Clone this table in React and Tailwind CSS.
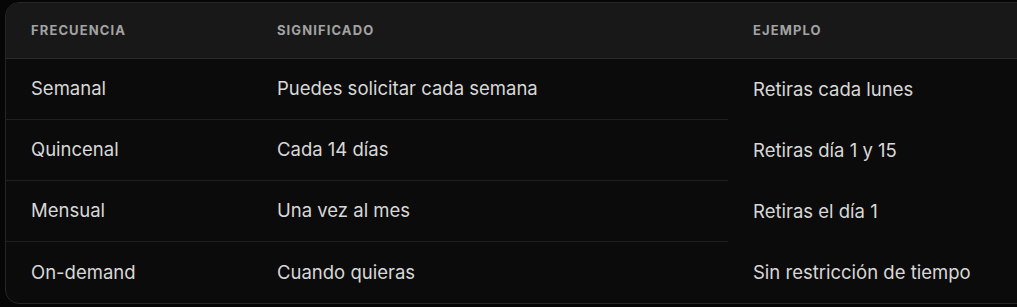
import React from 'react';

const rows = [
  ['Semanal', 'Puedes solicitar cada semana', 'Retiras cada lunes'],
  ['Quincenal', 'Cada 14 días', 'Retiras día 1 y 15'],
  ['Mensual', 'Una vez al mes', 'Retiras el día 1'],
  ['On-demand', 'Cuando quieras', 'Sin restricción de tiempo'],
];

function App() {
  return (
    <div className="w-screen h-[307px] overflow-hidden bg-[#060606] pl-[5px] pt-[2px]" style={{ fontFamily: 'Inter, "Noto Sans", sans-serif' }}>
      <div className="w-[1060px] rounded-[14px] border border-[#262626] bg-[#0b0b0b] overflow-hidden">
        <div className="grid grid-cols-[246px_476px_1fr] h-[56px] items-center bg-[#181818] border-b border-[#2a2a2a] text-[13px] font-bold tracking-[0.085em] text-[#a3a3a3] uppercase">
          <div className="pl-[25px]">Frecuencia</div>
          <div className="pl-[25px]">Significado</div>
          <div className="pl-[25px]">Ejemplo</div>
        </div>
        {rows.map((r, i) => (
          <div key={i} className="grid grid-cols-[246px_476px_1fr] text-[18.5px] tracking-[0em] text-[#d8d8d8]">
            <div className={'h-[61px] flex items-center pl-[25px] ' + (i < rows.length - 1 ? 'border-b border-[#1f1f1f]' : '')}>{r[0]}</div>
            <div className={'h-[61px] flex items-center pl-[25px] ' + (i < rows.length - 1 ? 'border-b border-[#1f1f1f]' : '')}>{r[1]}</div>
            <div className="h-[61px] flex items-center pl-[25px]">{r[2]}</div>
          </div>
        ))}
      </div>
    </div>
  );
}

export default App;
